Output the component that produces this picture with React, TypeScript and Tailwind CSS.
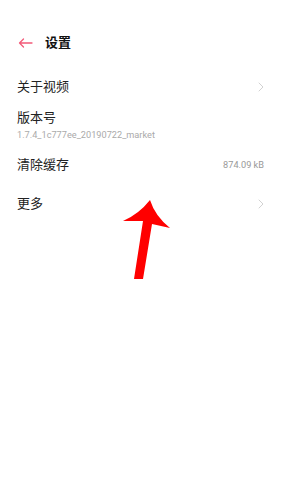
import { ReactNode } from 'react'

function Chevron(): JSX.Element {
  return (
    <svg width="6" height="10" viewBox="0 0 6 10" fill="none">
      <path d="M1 1l4 4-4 4" stroke="#d2d2d2" strokeWidth="1" strokeLinecap="round" strokeLinejoin="round" />
    </svg>
  )
}

function Row({ label, right, className }: { label: string; right?: ReactNode; className: string }): JSX.Element {
  return (
    <div className={`flex h-[20px] items-center justify-between ${className}`}>
      <span className="text-[13px] text-[#222]">{label}</span>
      {right}
    </div>
  )
}

function App(): JSX.Element {
  return (
    <div
      className="relative h-[500px] w-[281px] overflow-hidden bg-white"
      style={{ fontFamily: 'Roboto, "Noto Sans CJK SC", sans-serif' }}
    >
      {/* header */}
      <div className="mt-[33px] flex h-[20px] items-center pl-[18px]">
        <svg width="15" height="10" viewBox="0 0 15 10" fill="none">
          <path d="M14 5H1.5M5.5 1L1.5 5l4 4" stroke="#f25a78" strokeWidth="1.3" strokeLinecap="round" strokeLinejoin="round" />
        </svg>
        <span className="ml-[12px] text-[13px] font-bold text-[#111]">设置</span>
      </div>

      <div className="flex flex-col pl-[17px] pr-[17px]">
        <Row label="关于视频" className="mt-[24px]" right={<Chevron />} />
        <div className="mt-[11px] flex flex-col">
          <span className="text-[13px] leading-[20px] text-[#222]">版本号</span>
          <span className="text-[9.2px] leading-[14px] text-[#aaa]">1.7.4_1c777ee_20190722_market</span>
        </div>
        <Row
          label="清除缓存"
          className="mt-[13px]"
          right={<span className="text-[9.2px] text-[#999]">874.09 kB</span>}
        />
        <Row label="更多" className="mt-[19px]" right={<Chevron />} />
      </div>

      {/* red annotation arrow */}
      <svg className="absolute left-0 top-0" width="281" height="500" viewBox="0 0 281 500">
        <path
          d="M150 200 Q139 214 123 221 L143 221 L134 279 L143 279 L152 224 L170 228 Q155 216 150 200 Z"
          fill="#ff0000"
        />
      </svg>
    </div>
  )
}

export default App
